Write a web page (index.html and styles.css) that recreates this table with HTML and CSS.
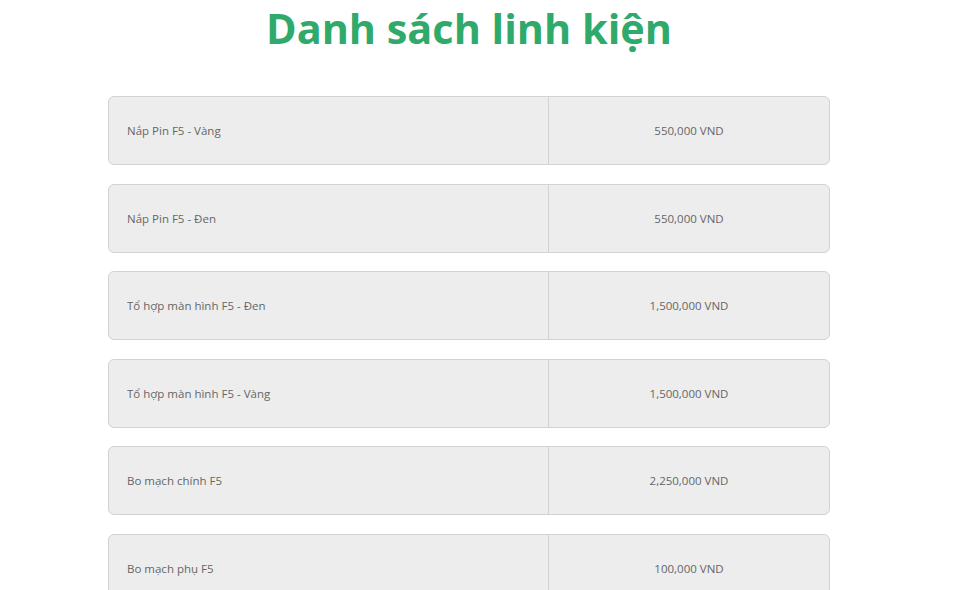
FILE: index.html
```html
<!DOCTYPE html>
<html lang="vi">
<head>
<meta charset="utf-8">
<title>Danh sách linh kiện</title>
<link rel="stylesheet" href="styles.css">
</head>
<body>
<main class="page">
  <h1 class="title">Danh sách linh kiện</h1>
  <ul class="list">
    <li class="item"><span class="name">Nắp Pin F5 - Vàng</span><span class="price">550,000 VND</span></li>
    <li class="item"><span class="name">Nắp Pin F5 - Đen</span><span class="price">550,000 VND</span></li>
    <li class="item"><span class="name">Tổ hợp màn hình F5 - Đen</span><span class="price">1,500,000 VND</span></li>
    <li class="item"><span class="name">Tổ hợp màn hình F5 - Vàng</span><span class="price">1,500,000 VND</span></li>
    <li class="item"><span class="name">Bo mạch chính F5</span><span class="price">2,250,000 VND</span></li>
    <li class="item"><span class="name">Bo mạch phụ F5</span><span class="price">100,000 VND</span></li>
  </ul>
</main>
</body>
</html>
```
FILE: styles.css
```css
html, body {
  margin: 0;
  padding: 0;
  background: #fff;
  overflow: hidden;
}
body {
  font-family: "Open Sans", "Noto Sans", sans-serif;
}
.page {
  width: 722px;
  margin-left: 108px;
}
.title {
  margin: 0;
  height: 96px;
  text-align: center;
  color: #2faa6b;
  font-size: 41.4px;
  font-weight: 700;
  line-height: 56px;
}
.list {
  list-style: none;
  margin: 0;
  padding: 0;
  display: flex;
  flex-direction: column;
  gap: 18.5px;
}
.item {
  display: grid;
  grid-template-columns: 440px 1fr;
  box-sizing: border-box;
  height: 69px;
  background: #ededed;
  border: 1px solid #d2d2d2;
  border-radius: 6px;
  color: #666;
  font-size: 11.5px;
}
.name {
  display: flex;
  align-items: center;
  padding-left: 18px;
  border-right: 1px solid #d2d2d2;
}
.price {
  display: flex;
  align-items: center;
  justify-content: center;
}
```
